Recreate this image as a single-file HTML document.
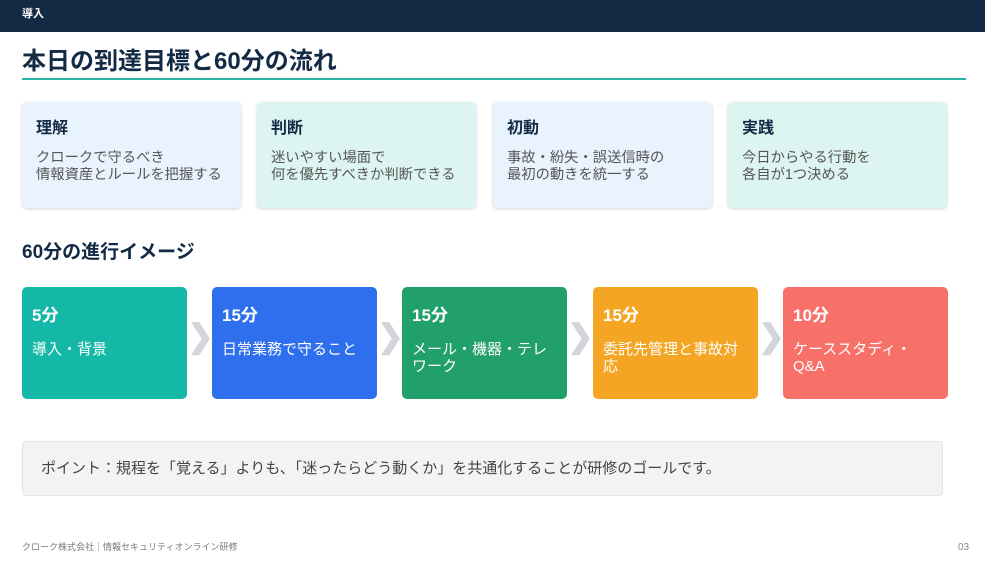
<!DOCTYPE html><html><head><meta charset="utf-8"><style>
*{margin:0;padding:0;box-sizing:border-box}
body{width:985px;height:565px;position:relative;background:#fff;font-family:"Liberation Sans","Noto Sans CJK JP",sans-serif;overflow:hidden}
.hdr{position:absolute;left:0;top:0;width:985px;height:32px;background:#132a45;color:#fff;font-size:11px;font-weight:bold;padding:5px 0 0 22px}
h1{position:absolute;left:22px;top:41px;font-size:24px;color:#132a45;font-weight:bold}
.ul{position:absolute;left:22px;top:78px;width:944px;height:2px;background:#2bb6a3}
.card{position:absolute;top:102px;width:219px;height:106px;border-radius:5px;box-shadow:0 1px 3px rgba(0,0,0,.18);padding:12px 14px}
.card b{display:block;font-size:16px;color:#132a45;margin-bottom:12px}
.card p{font-size:14.3px;color:#555;line-height:17px}
h2{position:absolute;left:22px;top:237px;font-size:19px;color:#132a45;font-weight:bold}
.bx{position:absolute;top:287px;width:165px;height:112px;border-radius:5px;color:#fff;padding:14px 20px 10px 10px}
.bx b{display:block;font-size:17px;margin-bottom:15px}
.bx p{font-size:15px;line-height:17px}
.ar{position:absolute;top:317px;color:#d3d5da;font-size:32px;font-weight:bold}
.pt{position:absolute;left:22px;top:441px;width:921px;height:55px;background:#f2f3f5;border:1px solid #e2e3e6;border-radius:4px;font-size:15px;color:#444;padding:15px 18px}
.ft{position:absolute;left:22px;top:540px;font-size:9px;color:#777}
.pg{position:absolute;left:958px;top:542px;font-size:10px;color:#888}
</style></head><body>
<div class="hdr">導入</div>
<h1>本日の到達目標と60分の流れ</h1>
<div class="ul"></div>
<div class="card" style="left:22px;background:#e9f3fd"><b>理解</b><p>クロークで守るべき<br>情報資産とルールを把握する</p></div>
<div class="card" style="left:257px;background:#ddf5f1"><b>判断</b><p>迷いやすい場面で<br>何を優先すべきか判断できる</p></div>
<div class="card" style="left:493px;background:#e9f3fd"><b>初動</b><p>事故・紛失・誤送信時の<br>最初の動きを統一する</p></div>
<div class="card" style="left:728px;background:#ddf5f1"><b>実践</b><p>今日からやる行動を<br>各自が1つ決める</p></div>
<h2>60分の進行イメージ</h2>
<div class="bx" style="left:22px;background:#14b8a6"><b>5分</b><p>導入・背景</p></div>
<div class="ar" style="left:187px">❯</div>
<div class="bx" style="left:212px;background:#2f6fed"><b>15分</b><p>日常業務で守ること</p></div>
<div class="ar" style="left:377px">❯</div>
<div class="bx" style="left:402px;background:#22a06b"><b>15分</b><p>メール・機器・テレワーク</p></div>
<div class="ar" style="left:567px">❯</div>
<div class="bx" style="left:593px;background:#f4a524"><b>15分</b><p>委託先管理と事故対応</p></div>
<div class="ar" style="left:758px">❯</div>
<div class="bx" style="left:783px;background:#f87168"><b>10分</b><p>ケーススタディ・Q&amp;A</p></div>
<div class="pt">ポイント：規程を「覚える」よりも、「迷ったらどう動くか」を共通化することが研修のゴールです。</div>
<div class="ft">クローク株式会社｜情報セキュリティオンライン研修</div>
<div class="pg">03</div>
</body></html>
